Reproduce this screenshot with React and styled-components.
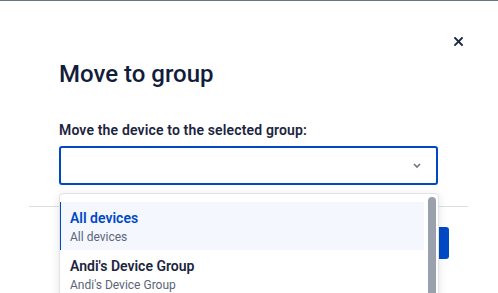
import React from "react";
import styled, { createGlobalStyle } from "styled-components";

const GlobalStyle = createGlobalStyle`
  html, body {
    margin: 0;
    padding: 0;
    background: #6b7588;
    overflow: hidden;
  }
  body {
    font-family: Roboto, "Liberation Sans", Arial, sans-serif;
    -webkit-font-smoothing: antialiased;
  }
  * { box-sizing: border-box; }
`;

const Backdrop = styled.div`
  width: 498px;
  height: 293px;
  padding-top: 1px;
  background: #6b7588;
`;

const Modal = styled.div`
  width: 100%;
  height: 100%;
  background: #ffffff;
  display: flex;
  flex-direction: column;
`;

const CloseRow = styled.div`
  display: flex;
  justify-content: flex-end;
  padding: 32px 32px 0 0;
`;

const CloseButton = styled.button`
  width: 16px;
  height: 16px;
  padding: 0;
  border: none;
  background: transparent;
  display: flex;
  align-items: center;
  justify-content: center;
  cursor: pointer;
`;

const Body = styled.div`
  padding: 0 60px 0 59px;
`;

const Title = styled.h2`
  margin: 9px 0 0;
  font-size: 24px;
  line-height: 32px;
  font-weight: 500;
  color: #131d3b;
`;

const Label = styled.label`
  display: block;
  margin-top: 30px;
  font-size: 14px;
  line-height: 20px;
  font-weight: 600;
  letter-spacing: 0.15px;
  color: #1b2540;
`;

const SelectWrap = styled.div`
  position: relative;
  margin-top: 6px;
`;

const SelectBox = styled.div`
  height: 39px;
  border: 2px solid #0049c6;
  border-radius: 3px;
  background: #fff;
  display: flex;
  align-items: center;
  justify-content: flex-end;
  padding-right: 15px;
`;

const Menu = styled.div`
  position: absolute;
  top: calc(100% + 8px);
  left: 0;
  width: 380px;
  height: 240px;
  background: #fff;
  border: 1px solid #e1e3e9;
  border-radius: 4px;
  box-shadow: 0 2px 8px rgba(22, 32, 64, 0.12);
  display: flex;
  overflow: hidden;
  z-index: 2;
`;

const List = styled.div`
  flex: 1;
  padding-top: 8px;
  display: flex;
  flex-direction: column;
`;

const Item = styled.div`
  height: 48px;
  padding: 6px 10px 0 9px;
  border-left: 2px solid ${(p) => (p.$active ? "#0049c6" : "transparent")};
  background: ${(p) => (p.$active ? "#f4f7fe" : "transparent")};
  margin-left: -1px;
`;

const ItemTitle = styled.div`
  font-size: 14px;
  line-height: 20px;
  font-weight: 600;
  color: ${(p) => (p.$active ? "#0049c6" : "#1b2540")};
`;

const ItemSub = styled.div`
  font-size: 12px;
  line-height: 18px;
  color: #5b6579;
`;

const ScrollTrack = styled.div`
  width: 14px;
  padding: 3px 2px 0 4px;
`;

const ScrollThumb = styled.div`
  width: 8px;
  height: 200px;
  border-radius: 4px;
  background: #9aa1ac;
`;

const Footer = styled.div`
  margin: 21px 30px 0 29px;
  border-top: 1px solid #dcdee6;
  padding: 20px 19px 0 0;
  display: flex;
  justify-content: flex-end;
  gap: 8px;
`;

const Button = styled.button`
  height: 32px;
  padding: 0 20px;
  border-radius: 3px;
  font-family: inherit;
  font-size: 14px;
  font-weight: 600;
  border: ${(p) => (p.$primary ? "none" : "1px solid #c6cad3")};
  background: ${(p) => (p.$primary ? "#0049c6" : "#fff")};
  color: ${(p) => (p.$primary ? "#fff" : "#1b2540")};
`;

const items = [
  { title: "All devices", sub: "All devices", active: true },
  { title: "Andi's Device Group", sub: "Andi's Device Group" },
  { title: "Office Devices", sub: "Office Devices" },
];

export default function App() {
  return (
    <>
      <GlobalStyle />
      <Backdrop>
        <Modal>
          <CloseRow>
            <CloseButton aria-label="Close">
              <svg width="9" height="9" viewBox="0 0 9 9">
                <path
                  d="M1 1 L8 8 M8 1 L1 8"
                  stroke="#1c2845"
                  strokeWidth="1.9"
                  strokeLinecap="square"
                />
              </svg>
            </CloseButton>
          </CloseRow>
          <Body>
            <Title>Move to group</Title>
            <Label>Move the device to the selected group:</Label>
            <SelectWrap>
              <SelectBox>
                <svg width="8" height="5" viewBox="0 0 8 5">
                  <path
                    d="M1 1 L4 4 L7 1"
                    fill="none"
                    stroke="#6b7385"
                    strokeWidth="1.6"
                  />
                </svg>
              </SelectBox>
              <Menu>
                <List>
                  {items.map((it) => (
                    <Item key={it.title} $active={it.active}>
                      <ItemTitle $active={it.active}>{it.title}</ItemTitle>
                      <ItemSub>{it.sub}</ItemSub>
                    </Item>
                  ))}
                </List>
                <ScrollTrack>
                  <ScrollThumb />
                </ScrollTrack>
              </Menu>
            </SelectWrap>
          </Body>
          <Footer>
            <Button>Cancel</Button>
            <Button $primary>Move</Button>
          </Footer>
        </Modal>
      </Backdrop>
    </>
  );
}
